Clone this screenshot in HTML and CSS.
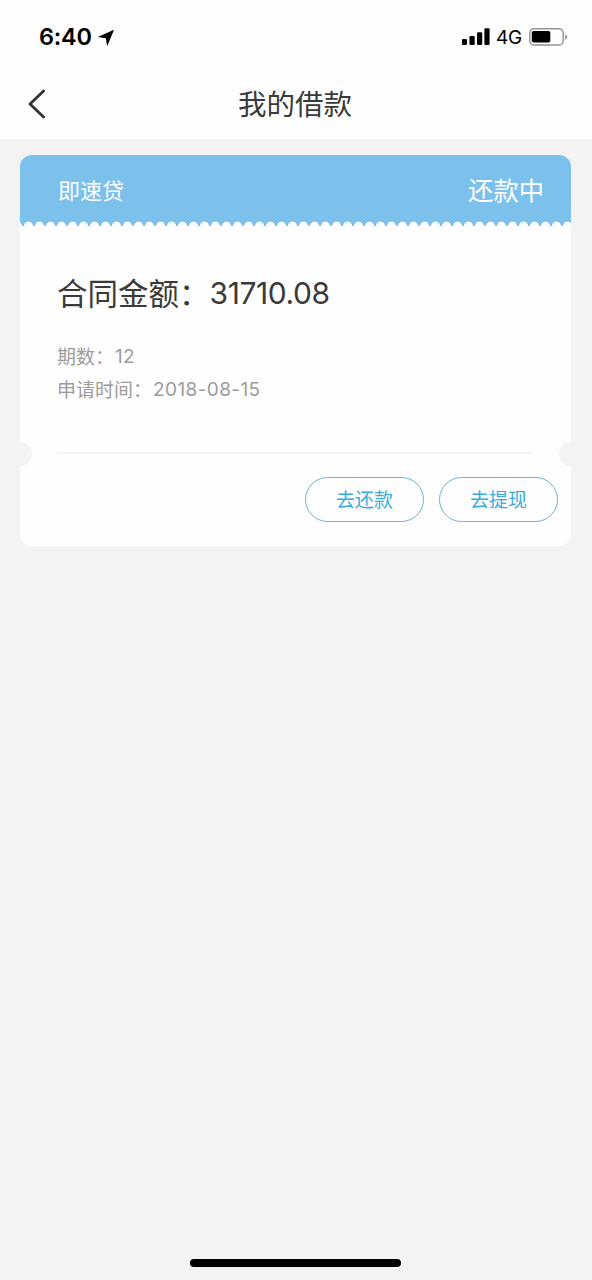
FILE: index.html
```html
<!DOCTYPE html>
<html lang="zh-CN">
<head>
<meta charset="utf-8">
<title>我的借款</title>
<link rel="stylesheet" href="styles.css">
</head>
<body>
<div class="screen">
  <header class="top">
    <div class="status">
      <div class="status-left">
        <span class="clock">6:40</span>
        <svg class="location" width="18" height="18" viewBox="0 0 18 18"><path d="M17 .8 10.2 17.2 8.8 9.2.8 8Z"/></svg>
      </div>
      <div class="status-right">
        <svg width="28" height="18" viewBox="0 0 28 18"><rect x="0" y="11" width="5" height="6" rx="1.2"/><rect x="7.5" y="8" width="5.2" height="9" rx="1.2"/><rect x="15" y="4.3" width="5.2" height="12.7" rx="1.2"/><rect x="22.4" y="0.3" width="5.2" height="16.7" rx="1.2"/></svg>
        <span class="network">4G</span>
        <svg class="battery" width="39" height="18" viewBox="0 0 39 18"><rect x=".8" y=".8" width="33.4" height="16.2" rx="4.2" fill="none" stroke="#929292" stroke-width="1.4"/><rect x="2.8" y="3" width="18.5" height="11.6" rx="1.8"/><path d="M36.2 6.2Q38.2 7 38.2 9T36.2 11.8Z" fill="#929292"/></svg>
      </div>
    </div>
    <nav class="nav">
      <svg class="back" width="18" height="30" viewBox="0 0 18 30"><path d="M15.6 2 2 15 15.6 28"/></svg>
      <h1 class="title">我的借款</h1>
    </nav>
  </header>
  <main class="content">
    <section class="card">
      <div class="card-head">
        <span class="product">即速贷</span>
        <span class="state">还款中</span>
      </div>
      <div class="card-body">
        <p class="amount"><span class="label">合同金额：</span><span class="amount-value">31710.08</span></p>
        <p class="detail"><span class="label">期数：</span><span class="term">12</span></p>
        <p class="detail"><span class="label">申请时间：</span><span class="date">2018-08-15</span></p>
      </div>
      <div class="tear"><span class="notch"></span><span class="line"></span><span class="notch notch-right"></span></div>
      <div class="actions">
        <button class="action">去还款</button>
        <button class="action">去提现</button>
      </div>
    </section>
  </main>
  <div class="home"></div>
</div>
</body>
</html>
```
FILE: styles.css
```css
* { box-sizing: border-box; }
body { margin: 0; background: #f3f3f3; font-family: Inter, "Noto Sans CJK SC", sans-serif; color: #3a3a3a; }
h1, p { margin: 0; font-weight: 400; }
svg { display: block; flex: none; }
.screen { width: 592px; height: 1280px; display: flex; flex-direction: column; }
.top { height: 139px; background: #fefefe; }
.status { height: 71px; display: flex; justify-content: space-between; padding: 0 24px 0 39px; color: #000; }
.status-left, .status-right { display: flex; align-items: center; height: 73px; }
.clock { font-size: 23.5px; font-weight: 600; letter-spacing: -.2px; }
.location { margin: 2px 0 0 5px; }
.network { font-size: 19px; margin: 1px 0 0 6px; letter-spacing: -.2px; }
.battery { margin-left: 7px; }
.nav { height: 66px; display: grid; grid-template-columns: 79px 1fr 81px; align-items: center; }
.back { margin-left: 28px; fill: none; stroke: #333; stroke-width: 2.8; stroke-linecap: round; stroke-linejoin: round; }
.title { text-align: center; font-size: 28.5px; line-height: 40px; padding-top: 2px; }
.content { flex: 1; padding: 16px 20px 0; }
.card { width: 551px; height: 391px; border-radius: 12px; background: #fefefe; overflow: hidden; }
.card-head { height: 71px; display: flex; justify-content: space-between; padding: 0 27px 0 38px; color: #fff; line-height: 72px; background: radial-gradient(circle at 50% 100%, #fefefe 4px, transparent 4.8px) 3px 66px / 11px 5px repeat-x, #7cc0ec; }
.product { font-size: 22px; }
.state { font-size: 25.3px; }
.card-body { height: 216px; padding: 42px 37px 0; }
.amount { display: flex; align-items: center; height: 50px; font-size: 30.5px; }
.amount .label { padding-bottom: 3px; }
.amount-value { font-size: 30px; letter-spacing: -.4px; }
.detail { display: flex; align-items: center; height: 33px; font-size: 19px; color: #9c9c9c; }
.detail .label { padding-bottom: 2px; }
.amount + .detail { margin-top: 22px; }
.term { margin-left: 1px; letter-spacing: .3px; }
.date { margin-left: 1px; letter-spacing: .4px; }
.tear { height: 24px; display: flex; align-items: center; justify-content: space-between; }
.notch { width: 12px; height: 24px; border-radius: 0 12px 12px 0; background: #f3f3f3; }
.notch-right { border-radius: 12px 0 0 12px; }
.line { width: 477px; height: 2px; margin-bottom: 2px; background: #f4f4f4; }
.actions { display: flex; justify-content: flex-end; gap: 15px; padding: 11px 13px 0; }
.action { width: 119px; height: 45px; padding: 1px 0 0; border: 1px solid #62b9d5; border-radius: 23px; background: transparent; color: #3aabda; font: 19px/44px Inter, "Noto Sans CJK SC", sans-serif; }
.home { width: 211px; height: 8px; border-radius: 4px; background: #000; margin: 0 0 13px 190px; }
```
